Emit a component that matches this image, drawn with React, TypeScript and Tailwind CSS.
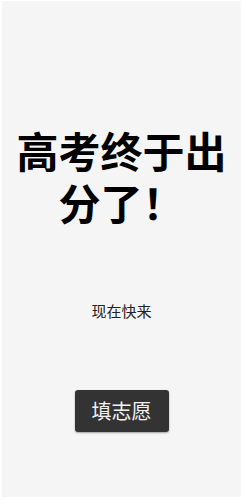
export default function App() {
  return (
    <div className="h-[500px] w-full bg-white px-[2px] pt-[1px] pb-[3px] font-['Noto_Sans_CJK_SC',sans-serif]">
      <div className="flex h-full flex-col items-center bg-[#f5f5f5]">
        <h1 className="mt-[123px] text-center text-[42px] font-bold leading-[52px] text-black">
          <div>高考终于出</div>
          <div>分了！</div>
        </h1>
        <p className="mt-[73px] text-[15px] leading-[20px] text-[#222]">现在快来</p>
        <button className="mt-[69px] flex h-[42px] w-[94px] items-center justify-center rounded-[3px] bg-[#333] text-[20px] text-[#f2f2f2] shadow-[0_1px_2px_rgba(0,0,0,0.35)]">
          填志愿
        </button>
      </div>
    </div>
  );
}
